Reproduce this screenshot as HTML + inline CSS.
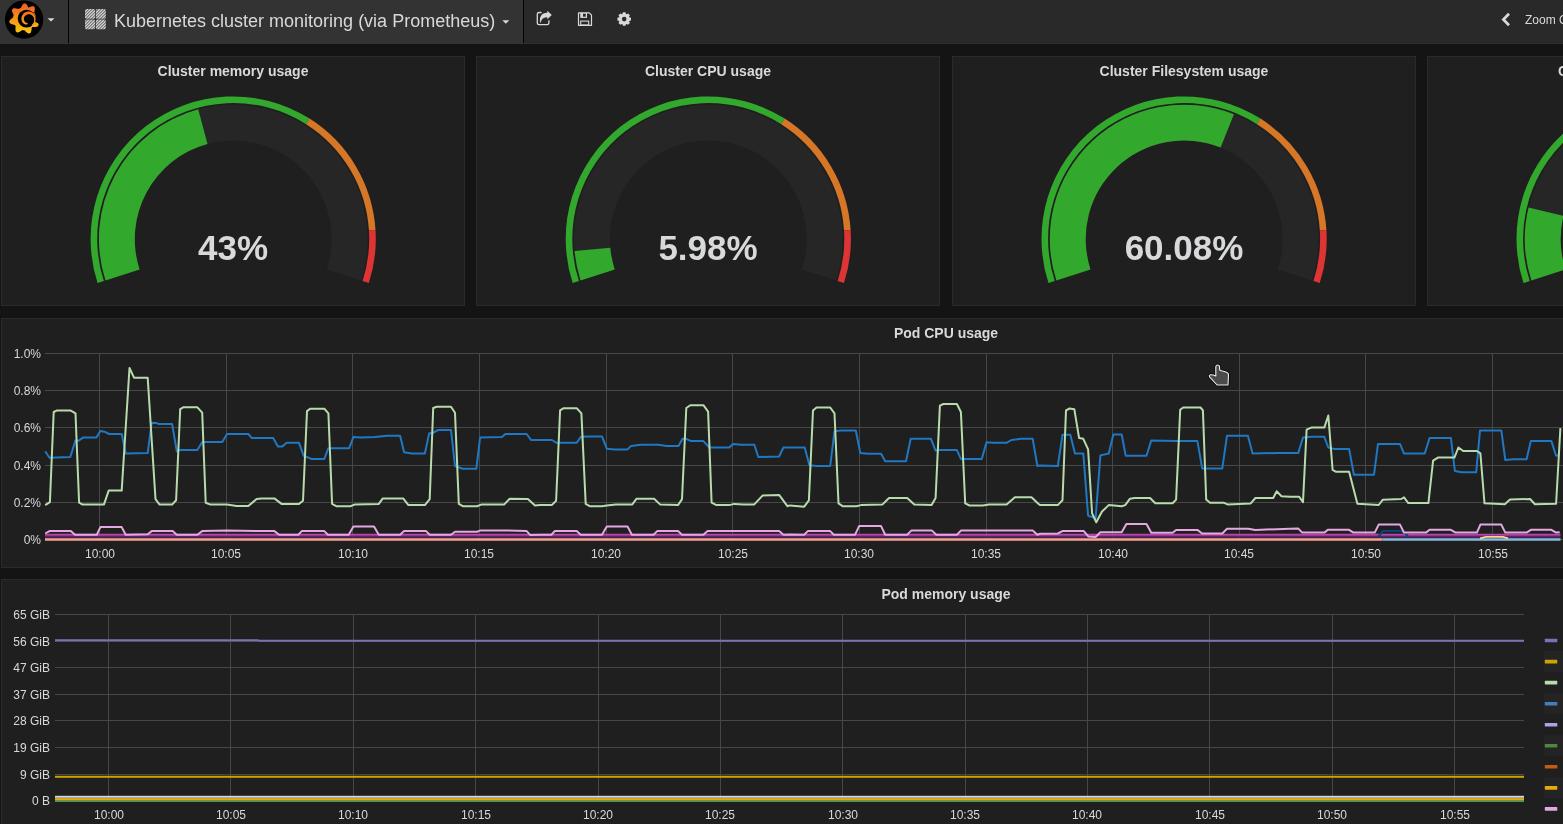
<!DOCTYPE html>
<html><head><meta charset="utf-8">
<style>
*{box-sizing:border-box}
html,body{margin:0;padding:0}
body{width:1563px;height:824px;overflow:hidden;background:#141414;font-family:"Liberation Sans",sans-serif;color:#d8d9da;position:relative}
.nav{position:absolute;left:0;top:0;width:1563px;height:44px;background:#292929;border-bottom:1px solid #2e2e2e}
.brand{position:absolute;left:0;top:0;width:68px;height:44px;background:#333}
.sep{position:absolute;top:0;width:1px;height:43px;background:#000}
.pagebtn{position:absolute;left:69px;top:0;width:454px;height:44px;background:#333}
.panel{position:absolute;background:#1f1f20;border:1px solid #2a2a2a}
.t{position:absolute;white-space:nowrap;will-change:transform}
.ptitle{text-align:center;font-weight:bold;font-size:14px;line-height:16px;color:#d8d9da}
.yl{font-size:12px;line-height:14px;color:#d8d9da;text-align:right;width:60px}
.xl{font-size:12px;line-height:14px;color:#d8d9da;text-align:center;width:60px}
svg{position:absolute;left:0;top:0;overflow:visible}
</style></head><body>

<div class="nav"></div><div class="brand"></div><div class="sep" style="left:68px"></div><div class="pagebtn"></div><div class="sep" style="left:523px"></div>
<div class="panel" style="left:1px;top:56px;width:464px;height:250px"></div>
<div class="panel" style="left:476px;top:56px;width:464px;height:250px"></div>
<div class="panel" style="left:952px;top:56px;width:464px;height:250px"></div>
<div class="panel" style="left:1427px;top:56px;width:464px;height:250px"></div>
<div class="panel" style="left:1px;top:318px;width:1890px;height:250px"></div>
<div class="panel" style="left:1px;top:579px;width:1890px;height:260px"></div>
<svg width="1563" height="824"><path d="M97.58,283.07 A142.6,142.6 0 0 1 309.61,118.60 L306.07,124.17 A136.0,136.0 0 0 0 103.86,281.03 Z" fill="rgb(50,168,45)"/><path d="M309.61,118.60 A142.6,142.6 0 0 1 375.52,230.05 L368.93,230.46 A136.0,136.0 0 0 0 306.07,124.17 Z" fill="rgb(214,118,39)"/><path d="M375.52,230.05 A142.6,142.6 0 0 1 368.82,283.07 L362.54,281.03 A136.0,136.0 0 0 0 368.93,230.46 Z" fill="rgb(223,52,52)"/><path d="M105.47,280.50 A134.3,134.3 0 1 1 360.93,280.50 L326.78,269.41 A98.4,98.4 0 1 0 139.62,269.41 Z" fill="#262626"/><path d="M105.47,280.50 A134.3,134.3 0 0 1 198.17,109.35 L207.53,144.01 A98.4,98.4 0 0 0 139.62,269.41 Z" fill="rgb(50,168,45)"/><path d="M572.68,283.07 A142.6,142.6 0 0 1 784.71,118.60 L781.17,124.17 A136.0,136.0 0 0 0 578.96,281.03 Z" fill="rgb(50,168,45)"/><path d="M784.71,118.60 A142.6,142.6 0 0 1 850.62,230.05 L844.03,230.46 A136.0,136.0 0 0 0 781.17,124.17 Z" fill="rgb(214,118,39)"/><path d="M850.62,230.05 A142.6,142.6 0 0 1 843.92,283.07 L837.64,281.03 A136.0,136.0 0 0 0 844.03,230.46 Z" fill="rgb(223,52,52)"/><path d="M580.57,280.50 A134.3,134.3 0 1 1 836.03,280.50 L801.88,269.41 A98.4,98.4 0 1 0 614.72,269.41 Z" fill="#262626"/><path d="M580.57,280.50 A134.3,134.3 0 0 1 574.53,250.90 L610.29,247.72 A98.4,98.4 0 0 0 614.72,269.41 Z" fill="rgb(50,168,45)"/><path d="M1048.48,283.07 A142.6,142.6 0 0 1 1260.51,118.60 L1256.97,124.17 A136.0,136.0 0 0 0 1054.76,281.03 Z" fill="rgb(50,168,45)"/><path d="M1260.51,118.60 A142.6,142.6 0 0 1 1326.42,230.05 L1319.83,230.46 A136.0,136.0 0 0 0 1256.97,124.17 Z" fill="rgb(214,118,39)"/><path d="M1326.42,230.05 A142.6,142.6 0 0 1 1319.72,283.07 L1313.44,281.03 A136.0,136.0 0 0 0 1319.83,230.46 Z" fill="rgb(223,52,52)"/><path d="M1056.37,280.50 A134.3,134.3 0 1 1 1311.83,280.50 L1277.68,269.41 A98.4,98.4 0 1 0 1090.52,269.41 Z" fill="#262626"/><path d="M1056.37,280.50 A134.3,134.3 0 0 1 1233.92,114.28 L1220.60,147.62 A98.4,98.4 0 0 0 1090.52,269.41 Z" fill="rgb(50,168,45)"/><path d="M1523.48,283.07 A142.6,142.6 0 0 1 1735.51,118.60 L1731.97,124.17 A136.0,136.0 0 0 0 1529.76,281.03 Z" fill="rgb(50,168,45)"/><path d="M1735.51,118.60 A142.6,142.6 0 0 1 1801.42,230.05 L1794.83,230.46 A136.0,136.0 0 0 0 1731.97,124.17 Z" fill="rgb(214,118,39)"/><path d="M1801.42,230.05 A142.6,142.6 0 0 1 1794.72,283.07 L1788.44,281.03 A136.0,136.0 0 0 0 1794.83,230.46 Z" fill="rgb(223,52,52)"/><path d="M1531.37,280.50 A134.3,134.3 0 1 1 1786.83,280.50 L1752.68,269.41 A98.4,98.4 0 1 0 1565.52,269.41 Z" fill="#262626"/><path d="M1531.37,280.50 A134.3,134.3 0 0 1 1528.53,207.57 L1563.43,215.97 A98.4,98.4 0 0 0 1565.52,269.41 Z" fill="rgb(50,168,45)"/></svg>
<div class="t ptitle" style="left:33.19999999999999px;width:400px;top:63px">Cluster memory usage</div>
<div class="t" style="left:83.19999999999999px;width:300px;top:228px;text-align:center;font-weight:bold;font-size:35px;line-height:40px;color:#d8d9da">43%</div>
<div class="t ptitle" style="left:508.29999999999995px;width:400px;top:63px">Cluster CPU usage</div>
<div class="t" style="left:558.3px;width:300px;top:228px;text-align:center;font-weight:bold;font-size:35px;line-height:40px;color:#d8d9da">5.98%</div>
<div class="t ptitle" style="left:984.0999999999999px;width:400px;top:63px">Cluster Filesystem usage</div>
<div class="t" style="left:1034.1px;width:300px;top:228px;text-align:center;font-weight:bold;font-size:35px;line-height:40px;color:#d8d9da">60.08%</div>
<div class="t ptitle" style="left:1557.5px;text-align:left;top:63px">Cluster pod usage</div>
<svg width="1563" height="824"><rect x="45" y="353" width="1518" height="1" fill="#474747"/><rect x="45" y="390" width="1518" height="1" fill="#474747"/><rect x="45" y="427" width="1518" height="1" fill="#474747"/><rect x="45" y="465" width="1518" height="1" fill="#474747"/><rect x="45" y="502" width="1518" height="1" fill="#474747"/><rect x="45" y="539" width="1518" height="1" fill="#474747"/><rect x="99" y="353" width="1" height="187" fill="#474747"/><rect x="226" y="353" width="1" height="187" fill="#474747"/><rect x="352" y="353" width="1" height="187" fill="#474747"/><rect x="479" y="353" width="1" height="187" fill="#474747"/><rect x="606" y="353" width="1" height="187" fill="#474747"/><rect x="732" y="353" width="1" height="187" fill="#474747"/><rect x="859" y="353" width="1" height="187" fill="#474747"/><rect x="986" y="353" width="1" height="187" fill="#474747"/><rect x="1112" y="353" width="1" height="187" fill="#474747"/><rect x="1239" y="353" width="1" height="187" fill="#474747"/><rect x="1365" y="353" width="1" height="187" fill="#474747"/><rect x="1492" y="353" width="1" height="187" fill="#474747"/><polyline points="45,539.5 1382.5,539.5" fill="none" stroke="#f9a38f" stroke-width="2.5"/><polyline points="1382.5,539.5 1560.5,539.5" fill="none" stroke="#8ab8d8" stroke-width="2.5"/><polyline points="45,536.8 1560.5,536.8" fill="none" stroke="#55246a" stroke-width="2"/><polyline points="45,534.8 1560.5,534.8" fill="none" stroke="#b943a8" stroke-width="2"/><polyline points="1480,538.3 1486,536.8 1503,536.8 1508,538.3" fill="none" stroke="#f4d598" stroke-width="1.8"/><polyline points="1378,537 1383,531 1402,531 1408,536" fill="none" stroke="#0a437c" stroke-width="2"/><polyline points="45.2,533.5 49.5,531.1 70.8,531.1 75.0,534.7 96.8,534.7 100.4,527.1 121.7,527.1 125.7,534.7 147.7,534.2 151.7,531.1 172.6,531.1 176.8,534.7 197.4,534.7 202.2,531.1 227.0,530.6 274.4,531.1 279.1,534.7 290.0,534.7 298.3,534.7 301.8,531.1 324.3,531.1 327.9,534.7 348.7,534.7 353.4,526.6 374.0,526.6 378.8,534.7 400.1,534.7 404.1,531.1 426.1,531.1 429.7,534.7 451.0,534.7 455.0,531.8 477.0,531.8 480.6,530.4 503.1,530.4 526.7,531.1 530.3,535.1 540.0,534.7 551.4,534.7 554.7,531.1 576.7,531.1 580.7,534.7 602.0,534.7 606.8,526.6 627.6,526.6 631.9,534.7 653.6,534.7 657.2,531.1 678.0,531.1 682.0,534.7 703.4,534.7 707.6,531.1 731.8,531.1 779.1,531.1 783.4,534.7 790.0,534.4 804.2,534.7 807.8,531.1 830.2,531.1 833.8,534.7 855.1,534.7 859.1,526.1 881.1,526.1 885.2,534.7 907.2,534.7 911.2,530.6 932.0,530.6 936.3,534.7 956.9,534.7 960.9,530.6 1032.7,530.6 1037.4,534.7 1040.0,533.8 1057.8,533.5 1062.5,531.1 1083.8,531.1 1088.5,536.6 1095.6,537.0 1100.4,532.3 1121.7,532.3 1126.4,524.0 1146.5,524.0 1151.3,532.8 1172.6,532.8 1176.1,529.9 1197.4,529.9 1202.2,533.5 1222.3,533.5 1227.0,528.7 1248.3,528.7 1255.4,529.9 1290.0,528.7 1298.3,528.6 1302.3,532.6 1324.3,532.6 1327.9,529.8 1349.1,529.8 1353.4,532.6 1374.7,532.6 1378.7,524.6 1400.0,524.6 1404.0,532.6 1426.0,532.6 1429.6,529.8 1450.9,529.8 1455.6,532.6 1476.9,532.6 1480.4,524.6 1501.3,524.6 1505.3,532.6 1526.6,532.6 1530.8,529.8 1551.4,529.8 1556.1,532.6 1559.7,532.2" fill="none" stroke="#e5a8e2" stroke-width="2" stroke-linejoin="round"/><polyline points="45.2,451.3 49.5,457.7 70.3,457.0 75.5,440.4 77.9,441.1 83.1,437.6 96.3,437.6 100.4,431.0 104.4,431.7 109.1,434.0 121.7,434.0 125.7,453.5 147.7,453.0 151.7,422.7 156.0,422.9 158.4,423.9 172.1,423.9 176.8,451.3 180.9,449.9 197.4,449.9 202.2,441.9 222.3,441.9 227.0,434.0 248.3,434.0 251.9,438.1 273.2,438.1 277.9,446.6 282.0,446.6 286.7,442.8 290.0,442.8 299.0,442.8 303.7,455.8 311.3,458.9 324.3,458.9 328.4,448.2 349.2,448.2 353.4,437.1 361.0,437.6 375.2,437.1 387.1,435.7 400.1,435.7 404.1,452.3 411.9,453.5 424.9,453.5 429.2,433.3 432.0,433.3 438.0,430.0 451.0,430.0 455.0,466.0 462.8,468.8 476.3,468.8 480.1,437.6 501.9,437.1 505.4,434.0 526.7,434.0 531.0,440.0 540.0,440.0 551.8,440.0 556.6,442.8 576.7,442.8 580.7,437.1 586.2,436.4 602.0,436.4 606.8,448.7 614.6,449.4 627.6,449.4 631.1,445.9 640.6,444.7 658.4,444.7 666.7,445.9 678.5,445.9 682.5,438.8 686.3,438.8 691.0,441.1 703.4,441.1 709.3,447.5 729.4,447.5 732.9,444.0 741.2,444.7 754.3,444.7 758.3,457.0 779.1,456.5 783.4,447.5 790.0,447.5 804.7,447.5 809.4,465.3 816.5,466.0 830.2,466.0 834.5,431.2 840.9,430.5 855.8,430.5 860.3,453.0 868.1,453.7 881.1,453.7 885.2,461.3 906.0,461.3 910.7,438.8 930.9,438.8 935.6,450.6 940.3,450.1 956.9,450.1 960.9,458.9 981.8,458.9 986.5,442.3 993.6,442.8 1006.6,442.8 1011.4,440.0 1020.8,438.8 1032.7,438.8 1037.4,466.0 1040.0,465.6 1057.8,466.0 1062.5,434.8 1070.3,434.8 1075.0,453.5 1083.3,453.5 1088.1,515.7 1095.6,518.1 1100.4,455.4 1108.7,453.5 1113.4,434.5 1121.7,434.5 1125.7,455.8 1146.5,455.8 1151.3,440.4 1174.9,441.1 1179.7,441.1 1197.4,441.1 1202.2,468.4 1222.3,468.4 1227.0,435.7 1247.9,435.7 1252.6,453.5 1276.7,453.0 1290.0,452.9 1298.3,452.9 1303.0,437.5 1311.3,436.8 1324.3,436.8 1328.3,447.5 1333.8,448.9 1349.1,448.9 1353.9,474.7 1374.0,474.7 1378.0,443.9 1400.0,443.9 1404.0,453.6 1424.8,453.4 1429.6,438.0 1450.9,438.0 1454.9,471.1 1461.5,472.3 1476.2,472.3 1480.0,430.4 1501.3,430.4 1505.3,460.0 1513.6,459.3 1526.6,459.3 1530.8,441.1 1551.4,441.1 1556.1,455.7 1558.5,455.3" fill="none" stroke="#1f78c1" stroke-width="2" stroke-linejoin="round"/><polyline points="45.2,505.1 49.9,502.2 53.7,412.0 56.6,410.6 70.8,410.6 75.5,413.4 79.1,502.7 82.6,504.6 103.9,504.6 108.7,490.6 121.7,490.6 129.5,368.0 134.0,377.7 147.7,377.7 155.5,499.1 159.6,504.6 172.1,504.6 176.1,500.3 180.2,409.2 183.2,407.3 197.4,407.3 202.2,412.7 205.7,502.7 210.5,504.6 227.0,504.6 236.5,506.0 248.3,506.0 256.6,499.1 261.4,498.4 274.4,498.4 281.5,503.9 290.0,503.9 299.0,503.9 303.0,500.8 307.0,411.1 310.1,408.7 324.3,408.7 328.4,413.4 332.1,503.9 336.2,506.2 350.4,506.2 355.1,504.4 378.8,503.9 382.8,498.4 403.2,498.4 408.4,505.1 424.9,505.1 429.7,499.1 433.2,408.0 436.8,406.8 451.0,406.8 455.0,412.7 458.8,503.9 462.8,506.2 477.0,506.2 481.8,504.4 504.3,504.4 509.7,498.7 527.9,499.1 535.0,505.5 540.0,505.1 551.8,505.1 556.1,500.8 560.1,410.4 563.7,408.2 576.7,408.2 581.4,413.4 585.7,503.9 589.7,506.2 602.0,506.2 606.8,505.5 615.8,504.4 632.3,504.4 636.6,498.7 654.1,498.7 660.3,504.6 678.0,505.1 682.0,499.1 686.3,408.0 690.3,405.2 703.4,405.2 708.1,411.6 711.6,502.7 716.4,505.1 729.4,505.1 734.1,503.9 743.6,504.4 754.3,504.4 762.5,495.6 779.1,494.9 787.4,506.2 790.0,505.4 804.2,506.7 808.9,500.3 813.0,410.4 816.5,407.5 830.2,407.5 834.5,413.4 838.5,503.4 842.6,506.2 856.3,506.2 861.0,505.1 882.3,504.6 889.0,498.0 907.2,498.0 914.3,504.6 931.6,505.1 935.6,498.0 939.9,405.6 943.4,404.0 956.9,404.0 960.9,412.0 965.2,503.4 969.5,505.5 982.9,505.5 988.9,504.6 1006.6,504.6 1014.9,497.3 1031.5,497.3 1038.6,503.9 1040.0,505.1 1057.8,505.1 1062.5,500.3 1066.0,410.4 1069.6,408.5 1074.3,409.2 1079.1,438.1 1083.3,438.8 1088.1,449.4 1092.1,513.4 1096.3,522.3 1102.0,511.5 1108.7,505.1 1121.7,506.2 1125.2,505.1 1130.0,498.7 1134.7,498.0 1150.1,498.0 1155.3,503.2 1172.6,503.2 1176.1,499.6 1180.2,409.7 1183.2,407.5 1200.5,407.5 1202.9,410.4 1206.2,499.6 1210.0,502.7 1223.5,502.7 1227.5,504.4 1250.7,503.4 1255.4,498.0 1273.2,498.0 1276.7,491.3 1281.5,496.3 1290.0,496.7 1299.0,496.7 1303.0,502.1 1306.6,429.7 1311.3,427.6 1324.3,427.6 1328.3,415.5 1332.6,469.9 1336.1,471.8 1349.1,471.8 1357.4,503.8 1378.7,505.0 1382.7,499.8 1401.2,499.0 1404.0,497.4 1408.3,503.1 1428.4,503.1 1433.1,460.7 1437.9,457.6 1454.4,457.6 1458.4,447.5 1463.2,451.0 1476.9,451.0 1480.4,453.4 1484.5,503.3 1504.8,504.2 1510.0,499.5 1530.1,499.0 1534.9,504.2 1556.1,503.8 1560.4,428.1" fill="none" stroke="#b7dbab" stroke-width="2" stroke-linejoin="round"/></svg>
<div class="t yl" style="left:-19.5px;top:347px">1.0%</div>
<div class="t yl" style="left:-19.5px;top:384px">0.8%</div>
<div class="t yl" style="left:-19.5px;top:421px">0.6%</div>
<div class="t yl" style="left:-19.5px;top:459px">0.4%</div>
<div class="t yl" style="left:-19.5px;top:496px">0.2%</div>
<div class="t yl" style="left:-19.5px;top:533px">0%</div>
<div class="t xl" style="left:69.60px;top:546.5px">10:00</div>
<div class="t xl" style="left:196.23px;top:546.5px">10:05</div>
<div class="t xl" style="left:322.86px;top:546.5px">10:10</div>
<div class="t xl" style="left:449.49px;top:546.5px">10:15</div>
<div class="t xl" style="left:576.12px;top:546.5px">10:20</div>
<div class="t xl" style="left:702.75px;top:546.5px">10:25</div>
<div class="t xl" style="left:829.38px;top:546.5px">10:30</div>
<div class="t xl" style="left:956.01px;top:546.5px">10:35</div>
<div class="t xl" style="left:1082.64px;top:546.5px">10:40</div>
<div class="t xl" style="left:1209.27px;top:546.5px">10:45</div>
<div class="t xl" style="left:1335.90px;top:546.5px">10:50</div>
<div class="t xl" style="left:1462.53px;top:546.5px">10:55</div>
<div class="t ptitle" style="left:746px;width:400px;top:325px">Pod CPU usage</div>
<svg width="1563" height="824"><rect x="55" y="614" width="1469" height="1" fill="#474747"/><rect x="55" y="641" width="1469" height="1" fill="#474747"/><rect x="55" y="667" width="1469" height="1" fill="#474747"/><rect x="55" y="694" width="1469" height="1" fill="#474747"/><rect x="55" y="720" width="1469" height="1" fill="#474747"/><rect x="55" y="747" width="1469" height="1" fill="#474747"/><rect x="55" y="774" width="1469" height="1" fill="#474747"/><rect x="55" y="800" width="1469" height="1" fill="#474747"/><rect x="108" y="614" width="1" height="187" fill="#474747"/><rect x="230" y="614" width="1" height="187" fill="#474747"/><rect x="353" y="614" width="1" height="187" fill="#474747"/><rect x="475" y="614" width="1" height="187" fill="#474747"/><rect x="598" y="614" width="1" height="187" fill="#474747"/><rect x="720" y="614" width="1" height="187" fill="#474747"/><rect x="842" y="614" width="1" height="187" fill="#474747"/><rect x="965" y="614" width="1" height="187" fill="#474747"/><rect x="1087" y="614" width="1" height="187" fill="#474747"/><rect x="1209" y="614" width="1" height="187" fill="#474747"/><rect x="1332" y="614" width="1" height="187" fill="#474747"/><rect x="1454" y="614" width="1" height="187" fill="#474747"/><polyline points="55,640.2 258,640.2 259,640.7 1524,640.7" fill="none" stroke="#806eb7" stroke-width="2"/><rect x="55" y="775.8" width="1469" height="2" fill="#cca300"/><rect x="55" y="795.8" width="1469" height="1.2" fill="#c8e6bd"/><rect x="55" y="797" width="1469" height="1.2" fill="#aea2e0"/><rect x="55" y="798.1" width="1469" height="2" fill="#e5ac0e"/><rect x="55" y="800.1" width="1469" height="1.8" fill="#629e51"/><rect x="1544.8" y="638.7" width="12.5" height="3.6" rx="0.6" fill="#806eb7"/><rect x="1544" y="651.0" width="19" height="21" fill="#242425"/><rect x="1544.8" y="659.8" width="12.5" height="3.6" rx="0.6" fill="#cca300"/><rect x="1544.8" y="680.8" width="12.5" height="3.6" rx="0.6" fill="#b7dbab"/><rect x="1544" y="693.1" width="19" height="21" fill="#242425"/><rect x="1544.8" y="701.9" width="12.5" height="3.6" rx="0.6" fill="#447ebc"/><rect x="1544.8" y="722.9" width="12.5" height="3.6" rx="0.6" fill="#aea2e0"/><rect x="1544" y="735.2" width="19" height="21" fill="#242425"/><rect x="1544.8" y="744.0" width="12.5" height="3.6" rx="0.6" fill="#508642"/><rect x="1544.8" y="765.0" width="12.5" height="3.6" rx="0.6" fill="#c15c17"/><rect x="1544" y="777.4" width="19" height="21" fill="#242425"/><rect x="1544.8" y="786.1" width="12.5" height="3.6" rx="0.6" fill="#e5ac0e"/><rect x="1544.8" y="807.1" width="12.5" height="3.6" rx="0.6" fill="#e5a8e2"/></svg>
<div class="t yl" style="left:-10px;top:607.5px">65 GiB</div>
<div class="t yl" style="left:-10px;top:634.5px">56 GiB</div>
<div class="t yl" style="left:-10px;top:660.5px">47 GiB</div>
<div class="t yl" style="left:-10px;top:687.5px">37 GiB</div>
<div class="t yl" style="left:-10px;top:713.5px">28 GiB</div>
<div class="t yl" style="left:-10px;top:740.5px">19 GiB</div>
<div class="t yl" style="left:-10px;top:767.5px">9 GiB</div>
<div class="t yl" style="left:-10px;top:793.5px">0 B</div>
<div class="t xl" style="left:78.60px;top:807.5px">10:00</div>
<div class="t xl" style="left:200.96px;top:807.5px">10:05</div>
<div class="t xl" style="left:323.32px;top:807.5px">10:10</div>
<div class="t xl" style="left:445.68px;top:807.5px">10:15</div>
<div class="t xl" style="left:568.04px;top:807.5px">10:20</div>
<div class="t xl" style="left:690.40px;top:807.5px">10:25</div>
<div class="t xl" style="left:812.76px;top:807.5px">10:30</div>
<div class="t xl" style="left:935.12px;top:807.5px">10:35</div>
<div class="t xl" style="left:1057.48px;top:807.5px">10:40</div>
<div class="t xl" style="left:1179.84px;top:807.5px">10:45</div>
<div class="t xl" style="left:1302.20px;top:807.5px">10:50</div>
<div class="t xl" style="left:1424.56px;top:807.5px">10:55</div>
<div class="t ptitle" style="left:746px;width:400px;top:586px">Pod memory usage</div>
<div class="t" style="left:114px;top:10.5px;font-size:18px;line-height:20px;color:#d8d9da">Kubernetes cluster monitoring (via Prometheus)</div>
<div class="t" style="left:1525px;top:13px;font-size:12px;line-height:14px;color:#d8d9da">Zoom Out</div>
<svg width="1563" height="824"><defs><linearGradient id="lg" x1="0" y1="0" x2="0" y2="1"><stop offset="0" stop-color="#f05a28"/><stop offset="1" stop-color="#fbca0a"/></linearGradient><pattern id="hatch" width="2.12" height="2.12" patternUnits="userSpaceOnUse" patternTransform="rotate(45)"><rect width="2.12" height="2.12" fill="#444"/><rect width="1.25" height="2.12" fill="#e8e8e8"/></pattern><filter id="bl" x="-10%" y="-10%" width="120%" height="120%"><feGaussianBlur stdDeviation="0.6"/></filter></defs><circle cx="24.1" cy="19.6" r="19.2" fill="#000" filter="url(#bl)"/><polygon points="11.36,18.80 11.62,18.58 11.89,18.36 12.16,18.15 12.43,17.96 12.71,17.77 12.99,17.59 13.09,17.40 13.11,17.20 13.14,17.00 13.17,16.80 13.21,16.61 13.25,16.41 13.29,16.21 13.34,16.02 13.39,15.82 13.45,15.63 13.50,15.44 13.56,15.25 13.63,15.06 13.69,14.87 13.52,14.59 13.36,14.30 13.20,14.00 13.04,13.70 12.90,13.39 12.76,13.07 12.63,12.75 12.51,12.42 12.40,12.09 12.29,11.75 12.19,11.40 12.10,11.05 12.02,10.70 11.95,10.33 11.89,9.97 12.04,9.75 12.20,9.53 12.36,9.32 12.53,9.11 12.70,8.90 12.88,8.70 13.06,8.50 13.24,8.30 13.61,8.28 13.98,8.28 14.34,8.28 14.71,8.30 15.07,8.32 15.42,8.35 15.77,8.40 16.12,8.45 16.46,8.51 16.80,8.58 17.13,8.65 17.46,8.74 17.78,8.83 18.10,8.94 18.41,9.05 18.58,8.94 18.75,8.84 18.92,8.74 19.10,8.65 19.28,8.55 19.46,8.46 19.64,8.38 19.82,8.29 20.01,8.21 20.19,8.14 20.38,8.06 20.57,7.99 20.76,7.93 20.95,7.86 21.07,7.58 21.19,7.27 21.33,6.96 21.47,6.66 21.63,6.35 21.79,6.05 21.96,5.75 22.15,5.45 22.34,5.16 22.54,4.86 22.75,4.57 22.97,4.29 23.21,4.00 23.45,3.72 23.70,3.45 23.96,3.41 24.23,3.40 24.50,3.40 24.77,3.40 25.04,3.41 25.31,3.42 25.57,3.44 25.84,3.46 26.09,3.72 26.32,4.01 26.54,4.30 26.75,4.59 26.95,4.89 27.15,5.19 27.33,5.49 27.50,5.80 27.67,6.10 27.82,6.41 27.96,6.72 28.10,7.03 28.22,7.34 28.34,7.66 28.54,7.70 28.83,7.53 29.12,7.37 29.42,7.21 29.73,7.06 30.04,6.92 30.36,6.78 30.69,6.65 31.02,6.53 31.36,6.42 31.71,6.32 32.06,6.22 32.41,6.14 32.77,6.06 33.11,6.03 33.33,6.19 33.55,6.34 33.77,6.50 33.98,6.66 34.19,6.83 34.40,7.00 34.60,7.18 34.77,7.39 34.79,7.77 34.80,8.13 34.80,8.50 34.79,8.86 34.77,9.22 34.75,9.57 34.71,9.92 34.66,10.27 34.61,10.61 34.55,10.95 34.47,11.28 34.39,11.61 34.30,11.94 34.21,12.25 34.14,12.54 34.25,12.71 34.36,12.88 34.46,13.05 34.56,13.22 34.65,13.40 34.75,13.58 34.84,13.76 34.92,13.94 35.01,14.12 35.09,14.31 35.16,14.49 35.24,14.68 35.31,14.87 35.37,15.06 35.44,15.25 35.50,15.44 35.55,15.63 35.61,15.82 35.66,16.02 35.71,16.21 35.75,16.41 35.79,16.61 35.83,16.80 35.86,17.00 35.89,17.20 35.91,17.40 35.94,17.60 35.96,17.80 35.97,18.00 35.98,18.20 35.99,18.40 36.00,18.60 36.00,18.80 36.00,19.00 35.99,19.20 35.98,19.40 35.97,19.60 35.96,19.80 35.94,20.00 35.91,20.20 36.09,20.43 36.32,20.67 36.54,20.92 36.76,21.18 36.97,21.45 37.17,21.73 37.37,22.01 37.57,22.30 37.75,22.60 37.93,22.91 38.11,23.22 38.27,23.54 38.43,23.87 38.59,24.21 38.73,24.55 38.68,24.82 38.57,25.06 38.46,25.31 38.34,25.55 38.22,25.79 38.10,26.03 37.97,26.27 37.84,26.50 37.52,26.62 37.16,26.71 36.80,26.79 36.45,26.86 36.09,26.92 35.74,26.97 35.39,27.00 35.04,27.03 34.69,27.05 34.35,27.06 34.00,27.06 33.66,27.05 33.33,27.03 33.00,27.01 32.67,26.97 32.49,27.07 32.34,27.21 32.20,27.35 32.04,27.48 31.89,27.61 31.74,27.74 31.66,27.96 31.66,28.30 31.64,28.63 31.62,28.97 31.58,29.30 31.54,29.64 31.49,29.99 31.43,30.33 31.36,30.67 31.27,31.02 31.18,31.36 31.08,31.71 30.97,32.06 30.84,32.40 30.71,32.75 30.52,32.98 30.27,33.08 30.02,33.18 29.77,33.27 29.51,33.36 29.26,33.45 29.00,33.53 28.74,33.60 28.45,33.55 28.13,33.36 27.82,33.17 27.51,32.97 27.22,32.77 26.93,32.56 26.64,32.34 26.37,32.12 26.11,31.89 25.85,31.66 25.60,31.42 25.37,31.18 25.14,30.93 24.91,30.68 24.70,30.43 24.50,30.30 24.30,30.30 24.10,30.29 23.90,30.28 23.70,30.27 23.50,30.26 23.30,30.24 23.10,30.21 22.90,30.19 22.70,30.16 22.50,30.13 22.31,30.09 22.09,30.15 21.83,30.36 21.57,30.56 21.29,30.76 21.01,30.95 20.73,31.14 20.43,31.32 20.13,31.49 19.82,31.66 19.50,31.82 19.18,31.97 18.85,32.11 18.51,32.25 18.17,32.38 17.82,32.50 17.51,32.52 17.27,32.40 17.03,32.27 16.80,32.14 16.57,32.00 16.34,31.86 16.11,31.72 15.89,31.57 15.73,31.33 15.66,30.96 15.61,30.60 15.56,30.24 15.53,29.88 15.50,29.52 15.49,29.17 15.48,28.81 15.49,28.47 15.50,28.12 15.52,27.78 15.55,27.44 15.60,27.10 15.64,26.77 15.70,26.45 15.69,26.19 15.56,26.04 15.44,25.88 15.32,25.72 15.20,25.56 15.08,25.40 14.97,25.23 14.86,25.06 14.75,24.89 14.49,24.82 14.16,24.77 13.83,24.72 13.50,24.65 13.16,24.58 12.83,24.49 12.50,24.40 12.17,24.29 11.83,24.18 11.50,24.05 11.17,23.92 10.83,23.77 10.50,23.62 10.18,23.45 9.85,23.28 9.70,23.04 9.62,22.79 9.56,22.53 9.49,22.26 9.44,22.00 9.38,21.74 9.33,21.47 9.29,21.21 9.43,20.92 9.65,20.62 9.88,20.34 10.12,20.06 10.36,19.79 10.60,19.53 10.85,19.28 11.10,19.03" fill="url(#lg)" transform="translate(0,0)" style="fill:url(#lg)" gradientUnits="userSpaceOnUse"/><circle cx="26.6" cy="18.6" r="8.9" fill="#000"/><path d="M27,18.5 L39,15.8 L39,23.5 Z" fill="#000"/><linearGradient id="lg2" x1="0" y1="0" x2="0" y2="1"><stop offset="0" stop-color="#f46d22"/><stop offset="1" stop-color="#f9a51a"/></linearGradient><path d="M32.6,26.2 C36.3,23.2 36.8,16.2 33,13.1 C29.5,10.4 24.6,11.4 22.4,14.9 C20.5,18 21.4,22.4 24.4,23.9 C25.5,24.5 26.8,24.6 28,24.1 L27.6,23.2 C26,23.1 24.2,21.9 23.9,19.6 C23.6,16.6 26,14.3 28.8,14.3 C32,14.3 34.3,16.9 34.2,19.9 C34.1,22.3 33.2,23.8 31.6,24.9 Z" fill="url(#lg2)"/><path d="M47.5,18.2 L54.5,18.2 L51,21.6 Z" fill="#d8d9da"/><rect x="85" y="9" width="10" height="9.8" rx="1.5" fill="url(#hatch)"/><rect x="95.8" y="9" width="10" height="9.8" rx="1.5" fill="url(#hatch)"/><rect x="85" y="19.5" width="10" height="9.8" rx="1.5" fill="url(#hatch)"/><rect x="95.8" y="19.5" width="10" height="9.8" rx="1.5" fill="url(#hatch)"/><path d="M502.3,20.2 L509.3,20.2 L505.8,23.8 Z" fill="#d8d9da"/><path d="M541.6,12.5 H539.1 Q537.3,12.5 537.3,14.3 V22.9 Q537.3,24.7 539.1,24.7 H547.1 Q548.9,24.7 548.9,22.9 V20.3" fill="none" stroke="#d8d9da" stroke-width="1.3"/><path d="M540.4,23.2 C538.8,17.8 541.2,12.8 547.3,12.8 L547.3,10.7 L551.8,15.1 L547.3,19.3 L547.3,17.3 C543.5,17 541.3,19.2 540.4,23.2 Z" fill="#d8d9da"/><path d="M578.5,12.9 H589.3 L591.5,15.2 V25.3 H578.5 Z" fill="none" stroke="#d8d9da" stroke-width="1.2" stroke-linejoin="round"/><rect x="580.3" y="12.9" width="6.7" height="5" fill="#d8d9da"/><rect x="583" y="13.7" width="2.8" height="3" fill="#292929"/><rect x="580.7" y="21.1" width="8" height="3.9" fill="none" stroke="#d8d9da" stroke-width="1.1"/><path fill-rule="evenodd" fill="#d8d9da" d="M629.18,17.29 L630.97,17.78 L630.97,20.42 L629.18,20.91 L629.00,21.34 L629.92,22.96 L628.06,24.82 L626.44,23.90 L626.01,24.08 L625.52,25.87 L622.88,25.87 L622.39,24.08 L621.96,23.90 L620.34,24.82 L618.48,22.96 L619.40,21.34 L619.22,20.91 L617.43,20.42 L617.43,17.78 L619.22,17.29 L619.40,16.86 L618.48,15.24 L620.34,13.38 L621.96,14.30 L622.39,14.12 L622.88,12.33 L625.52,12.33 L626.01,14.12 L626.44,14.30 L628.06,13.38 L629.92,15.24 L629.00,16.86 Z M626.5,19.1 A2.3,2.3 0 1 0 621.9,19.1 A2.3,2.3 0 1 0 626.5,19.1 Z"/><path d="M1509,13.8 L1503.4,19.5 L1509,25.2" fill="none" stroke="#d8d9da" stroke-width="2.7"/></svg>
<svg width="1563" height="824"><path d="M1215.8,376 L1215.8,367 Q1215.8,365 1217.7,365 Q1219.6,365 1219.6,367 L1219.6,370 L1221.5,370.7 L1223.3,371.2 L1225.2,371.8 L1227,372.4 Q1228.6,373.2 1228.5,375 L1228,385 L1217,385 L1209.5,376.8 Q1208.8,375.2 1210.5,374.8 Q1212.5,374.4 1215.8,376 Z" fill="#4b4b4b" stroke="#000" stroke-width="2.6" stroke-linejoin="round"/><path d="M1215.8,376 L1215.8,367 Q1215.8,365 1217.7,365 Q1219.6,365 1219.6,367 L1219.6,370 L1221.5,370.7 L1223.3,371.2 L1225.2,371.8 L1227,372.4 Q1228.6,373.2 1228.5,375 L1228,385 L1217,385 L1209.5,376.8 Q1208.8,375.2 1210.5,374.8 Q1212.5,374.4 1215.8,376 Z" fill="#4b4b4b" stroke="#f0f0f0" stroke-width="1.1" stroke-linejoin="round"/></svg>
</body></html>
